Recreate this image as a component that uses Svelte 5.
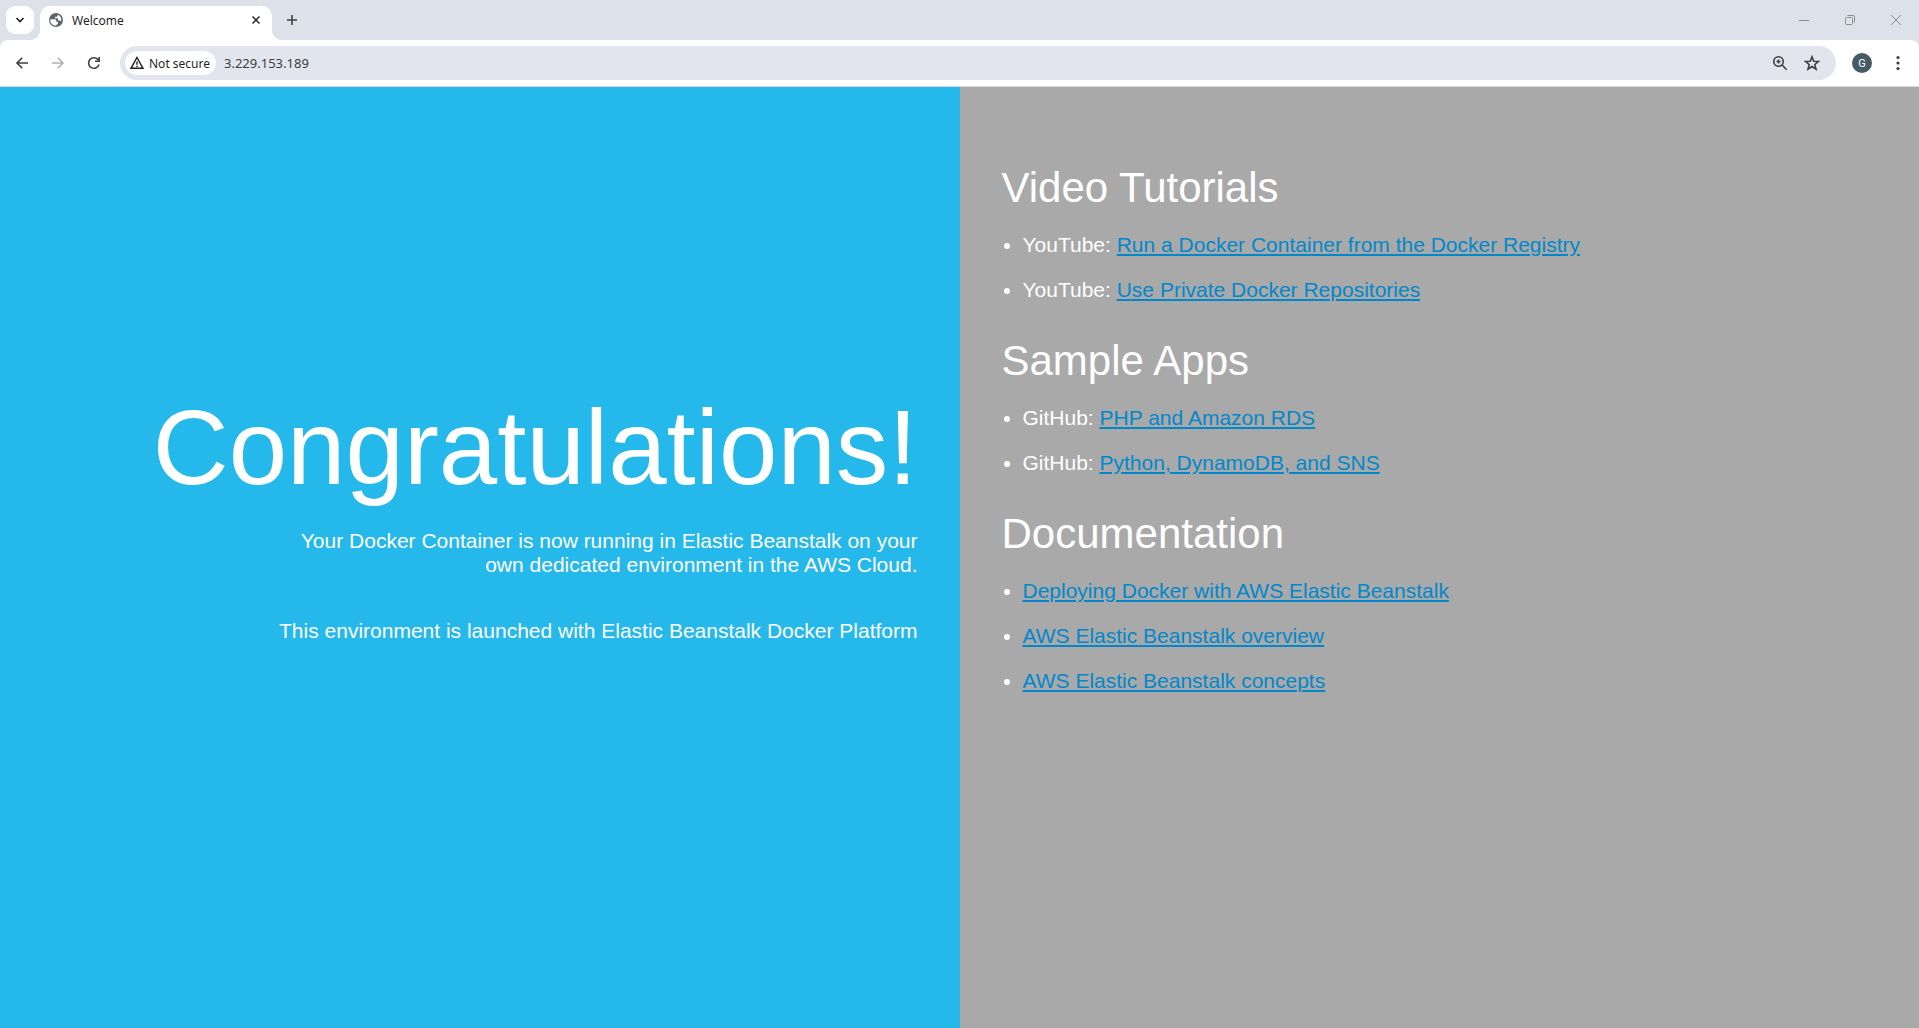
<script>
  const groups = [
    {
      title: 'Video Tutorials',
      items: [
        { source: 'YouTube: ', label: 'Run a Docker Container from the Docker Registry' },
        { source: 'YouTube: ', label: 'Use Private Docker Repositories' }
      ]
    },
    {
      title: 'Sample Apps',
      items: [
        { source: 'GitHub: ', label: 'PHP and Amazon RDS' },
        { source: 'GitHub: ', label: 'Python, DynamoDB, and SNS' }
      ]
    },
    {
      title: 'Documentation',
      items: [
        { source: '', label: 'Deploying Docker with AWS Elastic Beanstalk' },
        { source: '', label: 'AWS Elastic Beanstalk overview' },
        { source: '', label: 'AWS Elastic Beanstalk concepts' }
      ]
    }
  ];
  let address = $state('3.229.153.189');
</script>

<div class="window">
  <header>
    <div class="tabstrip">
      <button class="search-tabs" aria-label="Search tabs">
        <svg width="12" height="12" viewBox="0 0 12 12"><path d="M2.500 4 6 7.500 9.500 4" /></svg>
      </button>
      <div class="tab">
        <svg class="globe" width="16" height="16" viewBox="0 0 16 16">
          <circle cx="8" cy="8" r="7" />
          <path d="M2.300 7.200h4.200c1.300 0 1.800.7 1.800 1.600v1h1.600v1.700c0 .7-.6 1-1.500 1.100v1.200A5.700 5.700 0 0 1 2.300 7.200Z" />
          <path d="M9.700 2.500v1.100c0 .8-.5 1.200-1.300 1.200H7v1.400h2.200c.8 0 1 .5 1 1.200v1h1.300c.8 0 1.200.4 1.500 1.200A5.700 5.700 0 0 0 9.700 2.500Z" />
        </svg>
        <span class="tab-title">Welcome</span>
        <button class="close" aria-label="Close tab">
          <svg width="12" height="12" viewBox="0 0 12 12"><path d="m2.500 2.500 7 7m0-7-7 7" /></svg>
        </button>
      </div>
      <button class="new-tab" aria-label="New tab">
        <svg width="14" height="14" viewBox="0 0 14 14"><path d="M7 2v10M2 7h10" /></svg>
      </button>
      <div class="controls">
        <button aria-label="Minimize"><svg width="12" height="12" viewBox="0 0 12 12"><path d="M1 6.500h10" /></svg></button>
        <button aria-label="Restore"><svg width="12" height="12" viewBox="0 0 12 12"><rect x="1.500" y="3.500" width="7" height="7" rx="1" /><path d="M3.500 1.500H9a1.500 1.500 0 0 1 1.500 1.500v5.500" /></svg></button>
        <button aria-label="Close"><svg width="12" height="12" viewBox="0 0 12 12"><path d="m1 1 10 10m0-10L1 11" /></svg></button>
      </div>
    </div>
    <div class="toolbar">
      <nav>
        <button aria-label="Back"><svg width="16" height="16" viewBox="0 0 16 16"><path d="M14 8H3m5.200-5.200L3 8l5.200 5.200" /></svg></button>
        <button class="disabled" aria-label="Forward"><svg width="16" height="16" viewBox="0 0 16 16"><path d="M2 8h11M7.800 2.800 13 8l-5.200 5.200" /></svg></button>
        <button aria-label="Reload"><svg width="16" height="16" viewBox="0 0 16 16"><path d="M13 9.500A5.300 5.300 0 1 1 12.300 5M13.200 2v4.200H9" /></svg></button>
      </nav>
      <div class="omnibox">
        <button class="security">
          <svg width="16" height="16" viewBox="0 0 16 16"><path d="M8 2.500 14 13.300H2ZM8 6.500v3.200M8 10.700v1.300" /></svg>
          Not secure
        </button>
        <input aria-label="Address" bind:value={address} spellcheck="false" />
        <button class="action" aria-label="Zoom"><svg width="16" height="16" viewBox="0 0 16 16"><circle cx="6.500" cy="6.500" r="4.700" /><path d="m9.800 9.800 4.900 4.900M6.500 4.500v4M4.500 6.500h4" /></svg></button>
        <button class="action" aria-label="Bookmark this page"><svg width="16" height="16" viewBox="0 0 16 16"><path d="m8 1.800 1.700 4.400 4.700.3-3.600 3 1.200 4.600L8 11.500l-4 2.600 1.200-4.600-3.600-3 4.700-.3Z" /></svg></button>
      </div>
      <button class="avatar" aria-label="Profile">G</button>
      <button class="menu" aria-label="Menu"><svg width="16" height="16" viewBox="0 0 16 16"><circle cx="8" cy="2.500" r="1.600" /><circle cx="8" cy="8" r="1.600" /><circle cx="8" cy="13.500" r="1.600" /></svg></button>
    </div>
  </header>

  <main>
    <section class="congratulations">
      <h1>Congratulations!</h1>
      <p>Your Docker Container is now running in Elastic Beanstalk on your own dedicated environment in the AWS Cloud.</p>
      <p class="platform">This environment is launched with Elastic Beanstalk Docker Platform</p>
    </section>
    <section class="instructions">
      {#each groups as group}
        <h2>{group.title}</h2>
        <ul>
          {#each group.items as item}
            <li>{item.source}<a href="#top">{item.label}</a></li>
          {/each}
        </ul>
      {/each}
    </section>
  </main>
</div>

<style>
  :global(body) {
    margin: 0;
  }
  .window {
    display: flex;
    flex-direction: column;
    min-height: 100vh;
    font-family: 'Liberation Sans', Arial, sans-serif;
  }
  button {
    display: flex;
    align-items: center;
    justify-content: center;
    flex: none;
    margin: 0;
    padding: 0;
    border: 0;
    background: none;
    color: inherit;
    font: inherit;
  }
  svg {
    display: block;
    flex: none;
    fill: none;
    stroke: currentColor;
    stroke-width: 1.6;
  }
  header {
    background: #dde1e9;
    color: #3c4043;
    font-family: 'Noto Sans', sans-serif;
    font-size: 12px;
    border-bottom: 1px solid #d5d7dc;
  }
  .tabstrip {
    display: flex;
    align-items: center;
    height: 40px;
    padding-left: 6px;
  }
  .search-tabs {
    width: 28px;
    height: 28px;
    border-radius: 9px;
    background: #fff;
    color: #1f1f1f;
  }
  .tab {
    position: relative;
    display: flex;
    align-items: center;
    align-self: flex-end;
    box-sizing: border-box;
    width: 232px;
    height: 34px;
    margin-left: 6px;
    padding: 0 10px 6px 8px;
    border-radius: 10px 10px 0 0;
    background: #fff;
    color: #1f1f1f;
  }
  .tab::before,
  .tab::after {
    content: '';
    position: absolute;
    bottom: 0;
    width: 10px;
    height: 10px;
  }
  .tab::before {
    right: 100%;
    background: radial-gradient(circle at 0 0, transparent 10px, #fff 10px);
  }
  .tab::after {
    left: 100%;
    background: radial-gradient(circle at 100% 0, transparent 10px, #fff 10px);
  }
  .close svg {
    stroke-width: 1.4;
  }
  .globe {
    stroke: none;
  }
  .globe circle {
    fill: #5f6368;
  }
  .globe path {
    fill: #fff;
  }
  .tab-title {
    flex: 1;
    margin-left: 8px;
  }
  .new-tab {
    width: 28px;
    height: 28px;
    margin-left: 6px;
  }
  .controls {
    display: flex;
    margin-left: auto;
    color: #8a8d91;
  }
  .controls button {
    width: 46px;
    height: 40px;
  }
  .controls svg {
    stroke-width: 1;
  }
  .toolbar {
    display: flex;
    align-items: center;
    height: 46px;
    padding-right: 11px;
    border-radius: 8px 8px 0 0;
    background: #fff;
  }
  nav {
    display: flex;
    gap: 8px;
    padding: 0 12px 0 8px;
  }
  nav button {
    width: 28px;
    height: 28px;
  }
  .disabled {
    color: #aeb0b3;
  }
  .omnibox {
    display: flex;
    align-items: center;
    flex: 1;
    height: 34px;
    padding: 0 8px 0 5px;
    border-radius: 17px;
    background: #e2e5ed;
  }
  .security {
    gap: 4px;
    height: 24px;
    padding: 0 6px 0 4px;
    border-radius: 12px;
    background: #fff;
    color: #1f1f1f;
  }
  .security svg {
    stroke-width: 1.4;
  }
  input {
    flex: 1;
    min-width: 0;
    margin: 0;
    padding: 0 0 0 8px;
    border: 0;
    outline: 0;
    background: none;
    color: #3c4043;
    font: inherit;
    font-size: 13px;
  }
  .action {
    width: 32px;
    height: 28px;
  }
  .avatar {
    width: 20px;
    height: 20px;
    margin-left: 16px;
    border-radius: 50%;
    background: #455a64;
    color: #fff;
    font-family: Roboto, sans-serif;
    font-size: 11px;
  }
  .menu {
    width: 20px;
    height: 28px;
    margin-left: 16px;
  }
  .menu circle {
    fill: currentColor;
    stroke: none;
  }
  main {
    display: flex;
    flex: 1;
    color: #fff;
    font-size: 21px;
    line-height: 24px;
  }
  section {
    flex: 1 1 0;
    box-sizing: border-box;
    padding: 0 42px;
  }
  .congratulations {
    display: flex;
    flex-direction: column;
    align-items: flex-end;
    justify-content: center;
    padding-bottom: 84px;
    background: #25b8eb;
    text-align: right;
  }
  h1 {
    margin: 0;
    font-size: 105px;
    font-weight: 400;
    line-height: 120px;
  }
  p {
    max-width: 650px;
    margin: 21px 0 0;
  }
  .platform {
    margin-top: 42px;
  }
  .instructions {
    padding-top: 77px;
    background: #a9a9a9;
  }
  h2 {
    margin: 0 0 21px;
    font-size: 42px;
    font-weight: 400;
    line-height: 48px;
  }
  ul {
    margin: 0 0 35px;
    padding-left: 21px;
  }
  li + li {
    margin-top: 21px;
  }
  a {
    color: #0188cc;
    text-decoration-thickness: 2px;
    text-underline-offset: 2px;
  }
</style>
